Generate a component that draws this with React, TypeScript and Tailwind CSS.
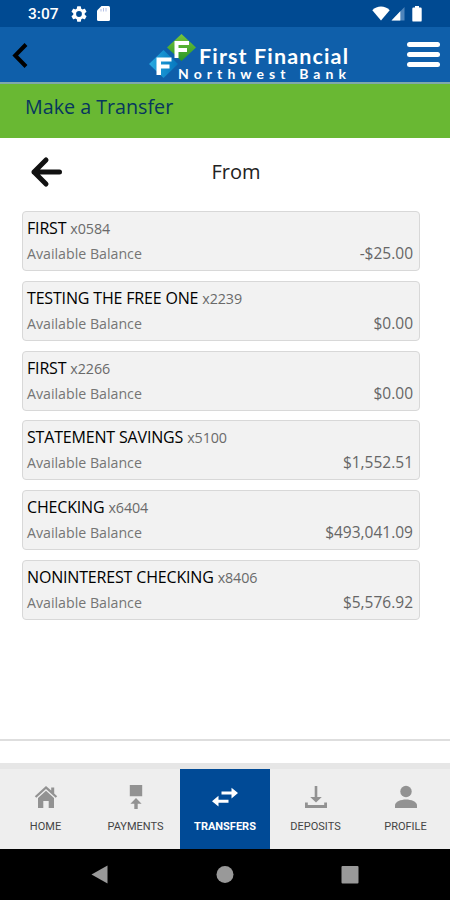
import type { ReactNode } from "react";

interface Account {
	name: string;
	mask: string;
	balance: string;
}

interface Tab {
	label: string;
	icon: ReactNode;
	active?: boolean;
}

const ACCOUNTS: Account[] = [
	{ name: "FIRST", mask: "x0584", balance: "-$25.00" },
	{ name: "TESTING THE FREE ONE", mask: "x2239", balance: "$0.00" },
	{ name: "FIRST", mask: "x2266", balance: "$0.00" },
	{ name: "STATEMENT SAVINGS", mask: "x5100", balance: "$1,552.51" },
	{ name: "CHECKING", mask: "x6404", balance: "$493,041.09" },
	{ name: "NONINTEREST CHECKING", mask: "x8406", balance: "$5,576.92" },
];

const TABS: Tab[] = [
	{
		label: "HOME",
		icon: (
			<svg width="24" height="26" viewBox="0 0 24 26" fill="currentColor">
				<path d="M12 2 0.8 12.2l1.5 1.6L12 5l9.7 8.8 1.5-1.6-3-2.8V3.5h-3v3.1z" />
				<path d="M12 6.8 4 14v10h5.3v-7h5.4v7H20V14z" />
			</svg>
		),
	},
	{
		label: "PAYMENTS",
		icon: (
			<svg width="24" height="26" viewBox="0 0 24 26" fill="currentColor">
				<path d="M5.8 1h12.4v11.2H5.8zM12 14l5.6 5.8h-3.9V25h-3.4v-5.2H6.4z" />
			</svg>
		),
	},
	{
		label: "TRANSFERS",
		active: true,
		icon: (
			<svg width="28" height="26" viewBox="0 0 28 26" fill="currentColor">
				<path d="M10.5 7.6h10V3.7l6.5 5.4-6.5 5.4v-3.9h-10z" />
				<path d="M17.5 15.7h-10v-3.900L1 17.200l6.500 5.400v-3.900h10z" />
			</svg>
		),
	},
	{
		label: "DEPOSITS",
		icon: (
			<svg width="24" height="26" viewBox="0 0 24 26" fill="currentColor">
				<path d="M10.7 2h2.6v11h4.5L12 18.5 6.2 13h4.5z" />
				<path d="M1 18.5h2.8V21h16.4v-2.5H23V24H1z" />
			</svg>
		),
	},
	{
		label: "PROFILE",
		icon: (
			<svg width="24" height="26" viewBox="0 0 24 26" fill="currentColor">
				<circle cx="12" cy="7.5" r="5.7" />
				<path d="M1 24v-2.5C1 17.5 7 15.5 12 15.5s11 2 11 6V24z" />
			</svg>
		),
	},
];

function StatusBar() {
	return (
		<div className="flex h-[27px] items-center bg-[#004a92] pl-[28px] pr-[28px] text-white">
			<span className="w-[43px] pt-[2px] font-[Roboto] text-[15.5px] font-medium leading-none">3:07</span>
			<svg width="16" height="16" viewBox="2 2 20 20" fill="currentColor">
				<path d="M19.140 12.940c.04-.3.060-.61.060-.94s-.02-.64-.07-.94l2.030-1.580a.49.49 0 0 0 .12-.61l-1.920-3.320a.49.49 0 0 0-.59-.22l-2.390.96a7 7 0 0 0-1.620-.94l-.36-2.540a.48.48 0 0 0-.48-.41h-3.840a.48.48 0 0 0-.47.41l-.36 2.540a7 7 0 0 0-1.620.94l-2.390-.96a.48.48 0 0 0-.59.22L2.740 8.870a.48.48 0 0 0 .12.610l2.030 1.580a7 7 0 0 0 0 1.880l-2.030 1.580a.49.49 0 0 0-.12.610l1.920 3.320c.12.220.370.290.590.220l2.390-.96c.5.380 1.030.7 1.620.94l.36 2.540c.05.240.240.410.480.410h3.840c.240 0 .440-.17.470-.41l.36-2.540a7 7 0 0 0 1.620-.94l2.390.96c.220.080.470 0 .59-.22l1.920-3.320a.48.48 0 0 0-.12-.61zM12 15.600a3.600 3.600 0 1 1 0-7.200 3.600 3.600 0 0 1 0 7.200z" />
			</svg>
			<svg className="ml-[10px]" width="13" height="15" viewBox="0 0 13 15">
				<path d="M4.5 0H11.5Q13 0 13 1.5V13.5Q13 15 11.5 15H1.5Q0 15 0 13.5V4.5z" fill="white" />
				<path d="M4 3v2.500M6.500 2v3.500M9 2v3.500" stroke="#b3bfe5" strokeWidth="1" />
			</svg>
			<svg className="ml-auto" width="18" height="15" viewBox="0 0 18 15" fill="currentColor">
				<path d="M0.3 4.200C5-.7 13-.7 17.700 4.200L9 14.600z" />
			</svg>
			<svg className="ml-[1px]" width="15" height="15" viewBox="0 0 15 15">
				<path d="M0.5 14.5 13.5 1v13.500z" fill="#4f85bb" />
				<path d="M0.5 14.5 9.3 5.3v9.200z" fill="white" />
			</svg>
			<svg className="ml-[6px]" width="10" height="16" viewBox="0 0 10 16" fill="currentColor">
				<path d="M3 0h4v1.600h1.500q1.200 0 1.200 1.200v11.600q0 1.200-1.200 1.200h-7q-1.200 0-1.200-1.200V2.800q0-1.200 1.200-1.200H3z" />
			</svg>
		</div>
	);
}

function BankLogo() {
	return (
		<svg width="204" height="50" viewBox="0 0 204 50" role="img" aria-label="First Financial Northwest Bank">
			<defs>
				<linearGradient id="leaf" x1="0" y1="0" x2="0" y2="1">
					<stop offset="0" stopColor="#78c63a" />
					<stop offset="1" stopColor="#279528" />
				</linearGradient>
				<linearGradient id="sky" x1="0" y1="0" x2="1" y2="0">
					<stop offset="0" stopColor="#27a9e1" />
					<stop offset="1" stopColor="#0576bd" />
				</linearGradient>
			</defs>
			<path d="M14.500 19 29 33 14.500 47 0 33z" fill="url(#sky)" />
			<path d="M32.500 3 47 16.500 32.500 30 18 16.500z" fill="url(#leaf)" />
			<path d="M25.500 10H40v4H29.500v3H38v4h-8.500v6h-4z" fill="white" />
			<path d="M7.500 26.500h15v4H12v3h8.500v4H12v6.500H7.500z" fill="white" />
			<text
				x="50"
				y="33"
				fill="white"
				fontFamily="Lato"
				fontSize="21.5"
				fontWeight="700"
				textLength="149"
			>
				First Financial
			</text>
			<text
				x="29"
				y="47.5"
				fill="white"
				fontFamily="Lato"
				fontSize="14"
				fontWeight="700"
				textLength="168"
			>
				Northwest Bank
			</text>
		</svg>
	);
}

function AppHeader() {
	return (
		<header className="flex h-[57px] items-center border-b-2 border-[#7fa8aa] bg-[#0f5faa]">
			<button type="button" aria-label="Back" className="ml-[12px] w-[17px]">
				<svg width="17" height="26" viewBox="0 0 17 26" fill="none" stroke="black" strokeWidth="4">
					<path d="M14 2.500 3.200 13.500l10.800 11" />
				</svg>
			</button>
			<div className="ml-[120px] mt-[2px]">
				<BankLogo />
			</div>
			<button type="button" aria-label="Menu" className="ml-auto mr-[10px] flex flex-col gap-[5px]">
				<span className="h-[5px] w-[33px] rounded-full bg-white" />
				<span className="h-[5px] w-[33px] rounded-full bg-white" />
				<span className="h-[5px] w-[33px] rounded-full bg-white" />
			</button>
		</header>
	);
}

function AccountCard({ account }: { account: Account }) {
	return (
		<li className="h-[60px] rounded-[4px] border border-[#d8d8d8] bg-[#f2f2f2] pl-[4px] pr-[6px]">
			<div className="mt-[5px] whitespace-nowrap text-[14.3px] leading-[22px] tracking-[-0.1px] text-[#6a6a6a]">
				<span className="text-[16px] tracking-[-0.17px] text-black">{account.name}</span>
				<span className="ml-[4px]">{account.mask}</span>
			</div>
			<div className="mt-[3px] flex justify-between leading-[22px] text-[#757575]">
				<span className="text-[14.2px]">Available Balance</span>
				<span className="mt-[-1px] text-[15.5px] text-[#666]">{account.balance}</span>
			</div>
		</li>
	);
}

function TabBar() {
	return (
		<nav className="grid h-[86px] grid-cols-5 border-t-[6px] border-[#e6e6e6] bg-[#eeeeee]">
			{TABS.map((tab) => (
				<button
					key={tab.label}
					type="button"
					className={`flex flex-col items-center pt-[15px] font-[Roboto] text-[11px] ${
						tab.active ? "bg-[#004a96] font-bold text-white" : "pl-px text-[#929292]"
					}`}
				>
					{tab.icon}
					<span className={`mt-[9px] leading-[16px] ${tab.active ? "" : "text-[#444]"}`}>{tab.label}</span>
				</button>
			))}
		</nav>
	);
}

function SystemNav() {
	return (
		<div className="flex h-[51px] items-center justify-center bg-black text-[#999]">
			<svg width="270" height="20" viewBox="90 0 270 20" fill="currentColor">
				<path d="M91.5 9.5 107.5 0.5v18z" />
				<circle cx="225" cy="9.5" r="8.5" />
				<rect x="341.5" y="1" width="17" height="17.5" rx="1" />
			</svg>
		</div>
	);
}

export default function App() {
	return (
		<div className="flex h-[900px] w-[450px] flex-col overflow-hidden bg-white font-['Open_Sans',sans-serif]">
			<StatusBar />
			<AppHeader />
			<div className="h-[54px] bg-[#69b833] pl-[25px] pt-[9px] text-[19.7px] leading-[28px] text-[#07365f]">
				Make a Transfer
			</div>
			<main className="flex flex-1 flex-col">
				<div className="grid h-[73px] grid-cols-[80px_1fr_80px] items-center pt-[1px]">
					<button type="button" aria-label="Back to transfer" className="ml-[30px] mt-[-7px]">
						<svg
							width="33"
							height="32"
							viewBox="0 0 33 32"
							fill="none"
							stroke="#111"
							strokeWidth="5"
							strokeLinecap="round"
							strokeLinejoin="round"
						>
							<path d="M16 4 4 16l12 12M4 16h25.500" />
						</svg>
					</button>
					<h1 className="mt-[-7px] pl-[22px] text-center text-[20px] text-[#222]">From</h1>
				</div>
				<ul className="ml-[22px] mr-[30px] flex flex-col gap-[9.8px]">
					{ACCOUNTS.map((account) => (
						<AccountCard key={account.mask} account={account} />
					))}
				</ul>
				<div className="mb-[22px] mt-auto border-t-2 border-[#dedede]" />
			</main>
			<TabBar />
			<SystemNav />
		</div>
	);
}
